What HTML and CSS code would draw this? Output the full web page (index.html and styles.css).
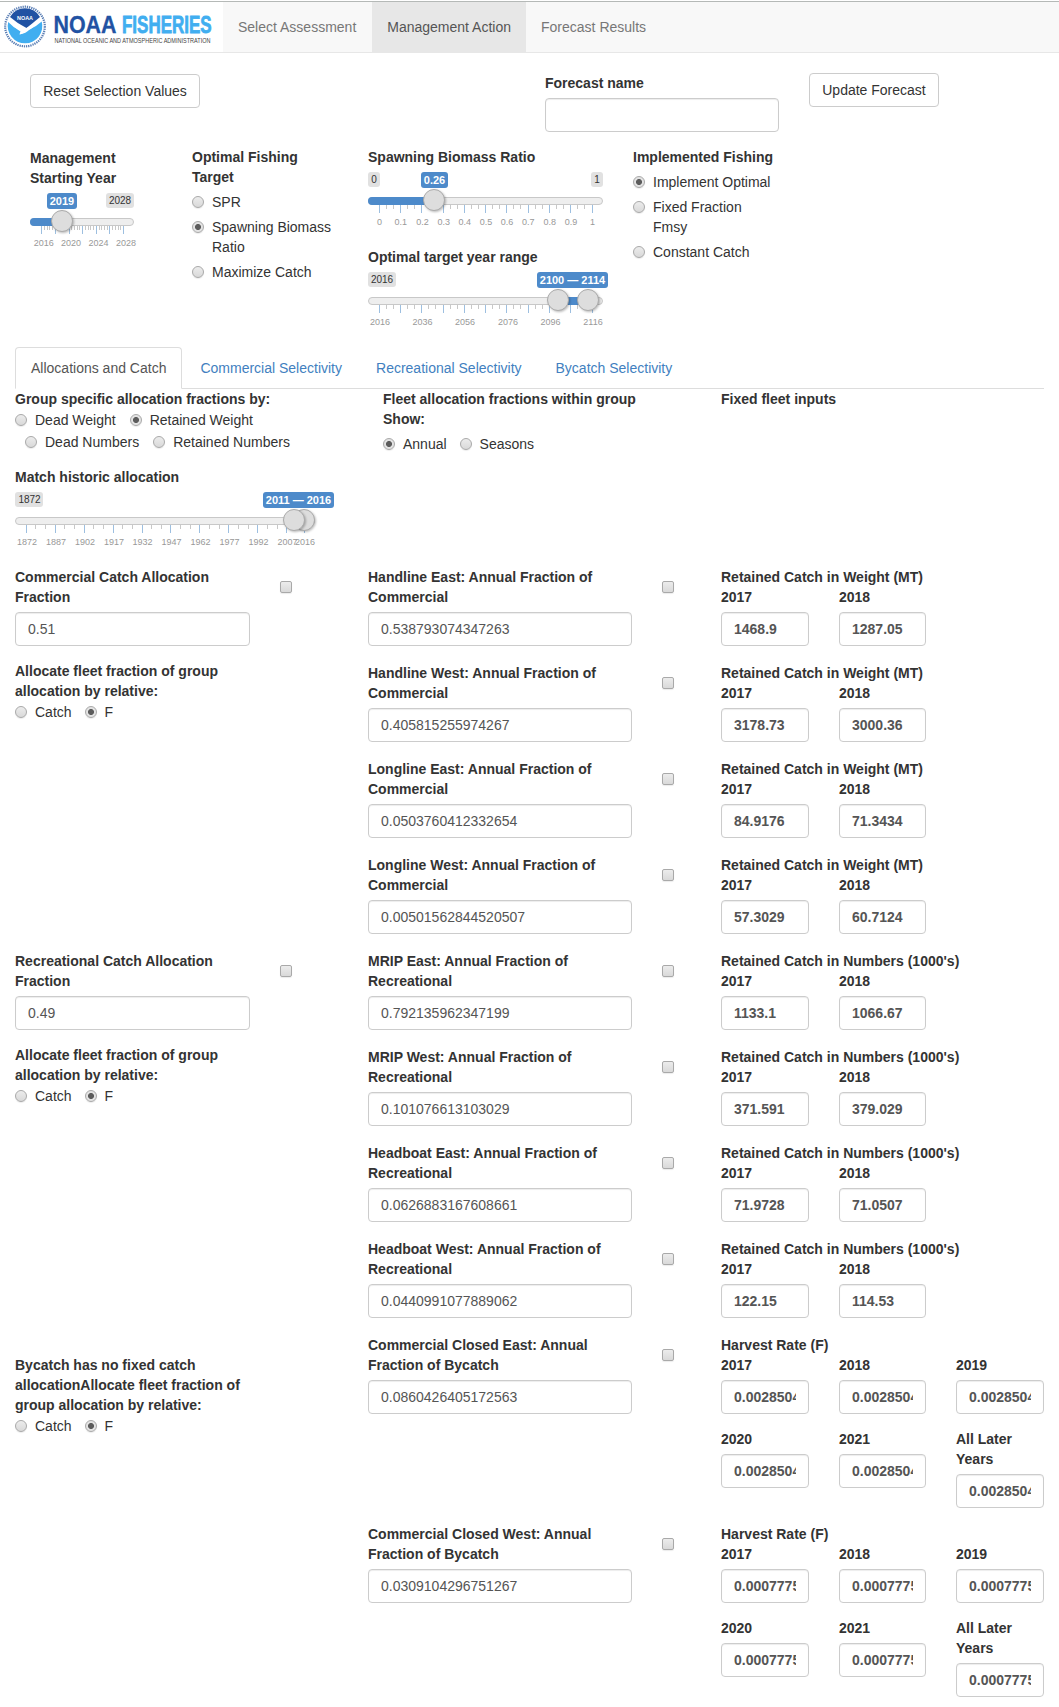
FILE: index.html
```html
<!DOCTYPE html>
<html lang="en">
<head>
<meta charset="utf-8">
<title>NOAA Fisheries - Management Action</title>
<link rel="stylesheet" href="styles.css">
</head>
<body>
<nav class="navbar">
  <div class="brand">
    <svg width="223" height="50" viewBox="0 2 223 50">
      <circle cx="25" cy="26.5" r="19.8" fill="none" stroke="#5b7fb5" stroke-width="2.2" stroke-dasharray="1.3 0.9"/>
      <circle cx="25" cy="26.5" r="17.8" fill="#fff"/>
      <path d="M10 17A17.3 17.3 0 0 1 40 17Q33 23 26.500 28Q18 24 10 17Z" fill="#2152a3"/>
      <path d="M8.200 22Q13 27.500 20.500 31L19.500 34.500Q26 33.500 30 29Q37 26 41.700 21.500A17.300 17.300 0 1 1 8.200 22Z" fill="#41aef0"/>
      <path d="M9 18Q17 23 23 29.500Q33 26 40.500 18Q36 28 25.500 31.500L20.500 34.500L22 32Q13 28 9 18Z" fill="#fff"/>
      <text x="17" y="20" class="logo-mini" textLength="16" lengthAdjust="spacingAndGlyphs">NOAA</text>
      <text transform="translate(53.500 33) scale(.9 1)" class="logo-noaa" textLength="70" lengthAdjust="spacingAndGlyphs">NOAA</text>
      <text transform="translate(122 33) scale(.7 1)" class="logo-fish" textLength="128" lengthAdjust="spacingAndGlyphs">FISHERIES</text>
      <text transform="translate(54.500 43) scale(.75 1)" class="logo-sub" textLength="208" lengthAdjust="spacingAndGlyphs">NATIONAL OCEANIC AND ATMOSPHERIC ADMINISTRATION</text>
    </svg>
  </div>
  <a class="nav-item wide">Select Assessment</a>
  <a class="nav-item active">Management Action</a>
  <a class="nav-item">Forecast Results</a>
</nav>

<section class="actions">
  <div><button class="btn reset">Reset Selection Values</button></div>
  <label class="forecast"><span class="label">Forecast name</span><input class="field" type="text"></label>
  <div><button class="btn update">Update Forecast</button></div>
</section>

<section class="settings">
  <div class="start-year">
    <div class="label">Management<br>Starting Year</div>
    <svg class="slider" width="104" height="60">
      <rect class="track" x="0.500" y="25.500" width="103" height="7" rx="3.500"/>
      <path class="bar" d="M32 25H4a4 4 0 0 0 0 8H32z"/>
      <path class="major" d="M11.500 33v8M25.500 33v8M39.500 33v8M52.500 33v8M66.500 33v8M79.500 33v8M93.500 33v8"/>
      <path class="minor" d="M14.500 33v4M17.500 33v4M19.500 33v4M22.500 33v4M28.500 33v4M30.500 33v4M33.500 33v4M36.500 33v4M41.500 33v4M44.500 33v4M47.500 33v4M49.500 33v4M55.500 33v4M58.500 33v4M60.500 33v4M63.500 33v4M69.500 33v4M71.500 33v4M74.500 33v4M77.500 33v4M82.500 33v4M85.500 33v4M88.500 33v4M90.500 33v4"/>
      <g class="tick"><text x="13.700" y="53">2016</text><text x="41" y="53">2020</text><text x="68.500" y="53">2024</text><text x="96" y="53">2028</text></g>
      <rect class="edge" x="76" y="0" width="28" height="15" rx="3"/><text class="edge-text" x="90" y="11">2028</text>
      <rect class="bar" x="17" y="0" width="30" height="16" rx="3"/><text class="value" x="32" y="12">2019</text>
      <circle class="handle" cx="32" cy="28" r="10.500"/>
    </svg>
  </div>
  <div class="radios">
    <div class="label">Optimal Fishing<br>Target</div>
    <label><input type="radio" name="target">SPR</label>
    <label><input type="radio" name="target" checked>Spawning Biomass<br>Ratio</label>
    <label><input type="radio" name="target">Maximize Catch</label>
  </div>
  <div class="ratio">
    <div class="label">Spawning Biomass Ratio</div>
    <svg class="slider" width="235" height="60">
      <rect class="track" x="0.500" y="25.500" width="234" height="7" rx="3.500"/>
      <path class="bar" d="M66 25H4a4 4 0 0 0 0 8H66z"/>
      <path class="major" d="M11.500 33v8M32.500 33v8M53.500 33v8M75.500 33v8M96.500 33v8M117.500 33v8M138.500 33v8M160.500 33v8M181.500 33v8M202.500 33v8M224.500 33v8"/>
      <path class="minor" d="M18.500 33v4M25.500 33v4M39.500 33v4M46.500 33v4M60.500 33v4M67.500 33v4M82.500 33v4M89.500 33v4M103.500 33v4M110.500 33v4M124.500 33v4M131.500 33v4M145.500 33v4M152.500 33v4M167.500 33v4M174.500 33v4M188.500 33v4M195.500 33v4M209.500 33v4M216.500 33v4"/>
      <g class="tick"><text x="11.500" y="53">0</text><text x="32.700" y="53">0.1</text><text x="54.500" y="53">0.2</text><text x="75.700" y="53">0.3</text><text x="96.700" y="53">0.4</text><text x="118" y="53">0.5</text><text x="139" y="53">0.6</text><text x="160.300" y="53">0.7</text><text x="181.700" y="53">0.8</text><text x="203" y="53">0.9</text><text x="224.500" y="53">1</text></g>
      <rect class="edge" x="0" y="0" width="12" height="15" rx="3"/><text class="edge-text" x="6" y="11">0</text>
      <rect class="edge" x="223" y="0" width="12" height="15" rx="3"/><text class="edge-text" x="229" y="11">1</text>
      <rect class="bar" x="53" y="0" width="27" height="16" rx="3"/><text class="value" x="66.500" y="12">0.26</text>
      <circle class="handle" cx="66" cy="28" r="10.500"/>
    </svg>
    <div class="label range-label">Optimal target year range</div>
    <svg class="slider" width="235" height="60">
      <rect class="track" x="0.500" y="25.500" width="234" height="7" rx="3.500"/>
      <rect class="bar" x="190" y="25" width="30" height="8"/>
      <path class="major" d="M11.500 33v8M32.500 33v8M53.500 33v8M75.500 33v8M96.500 33v8M117.500 33v8M138.500 33v8M160.500 33v8M181.500 33v8M202.500 33v8M224.500 33v8"/>
      <path class="minor" d="M18.500 33v4M25.500 33v4M39.500 33v4M46.500 33v4M60.500 33v4M67.500 33v4M82.500 33v4M89.500 33v4M103.500 33v4M110.500 33v4M124.500 33v4M131.500 33v4M145.500 33v4M152.500 33v4M167.500 33v4M174.500 33v4M188.500 33v4M195.500 33v4M209.500 33v4M216.500 33v4"/>
      <g class="tick"><text x="12" y="53">2016</text><text x="54.500" y="53">2036</text><text x="97" y="53">2056</text><text x="140" y="53">2076</text><text x="182.500" y="53">2096</text><text x="225" y="53">2116</text></g>
      <rect class="edge" x="0" y="0" width="28" height="15" rx="3"/><text class="edge-text" x="14" y="11">2016</text>
      <rect class="bar" x="169" y="0" width="71" height="16" rx="3"/><text class="value" x="204.500" y="12">2100 — 2114</text>
      <circle class="handle" cx="190" cy="28" r="10.500"/><circle class="handle" cx="220" cy="28" r="10.500"/>
    </svg>
  </div>
  <div class="radios">
    <div class="label">Implemented Fishing</div>
    <label><input type="radio" name="impl" checked>Implement Optimal</label>
    <label><input type="radio" name="impl">Fixed Fraction<br>Fmsy</label>
    <label><input type="radio" name="impl">Constant Catch</label>
  </div>
</section>

<div class="tabs">
  <a class="tab current">Allocations and Catch</a>
  <a class="tab">Commercial Selectivity</a>
  <a class="tab">Recreational Selectivity</a>
  <a class="tab">Bycatch Selectivity</a>
</div>

<section class="panel-head">
  <div>
    <div class="label">Group specific allocation fractions by:</div>
    <div class="inline first"><label><input type="radio" name="grp">Dead Weight</label><label><input type="radio" name="grp" checked>Retained Weight</label></div>
    <div class="inline second"><label><input type="radio" name="grp">Dead Numbers</label><label><input type="radio" name="grp">Retained Numbers</label></div>
    <div class="label historic">Match historic allocation</div>
    <svg class="slider" width="300" height="60">
      <rect class="track" x="0.500" y="25.500" width="299" height="7" rx="3.500"/>
      <path class="major" d="M11.500 33v8M40.500 33v8M69.500 33v8M98.500 33v8M127.500 33v8M155.500 33v8M184.500 33v8M213.500 33v8M242.500 33v8M271.500 33v8M289.500 33v8"/>
      <path class="minor" d="M20.500 33v4M30.500 33v4M49.500 33v4M59.500 33v4M78.500 33v4M88.500 33v4M107.500 33v4M117.500 33v4M136.500 33v4M146.500 33v4M165.500 33v4M175.500 33v4M194.500 33v4M204.500 33v4M223.500 33v4M233.500 33v4M252.500 33v4M262.500 33v4"/>
      <g class="tick"><text x="12" y="53">1872</text><text x="41" y="53">1887</text><text x="70" y="53">1902</text><text x="99" y="53">1917</text><text x="127.500" y="53">1932</text><text x="156.500" y="53">1947</text><text x="185.500" y="53">1962</text><text x="214.500" y="53">1977</text><text x="243.500" y="53">1992</text><text x="272.500" y="53">2007</text><text x="290" y="53">2016</text></g>
      <rect class="edge" x="0" y="0" width="28" height="15" rx="3"/><text class="edge-text" x="14.500" y="11">1872</text>
      <rect class="bar" x="248" y="0" width="71" height="16" rx="3"/><text class="value" x="283.500" y="12">2011 — 2016</text>
      <circle class="handle" cx="289" cy="28" r="10.500"/><circle class="handle" cx="279" cy="28" r="10.500"/>
    </svg>
  </div>
  <div class="fleet-head">
    <div class="label">Fleet allocation fractions within group<br>Show:</div>
    <div class="inline show"><label><input type="radio" name="show" checked>Annual</label><label><input type="radio" name="show">Seasons</label></div>
  </div>
  <div class="label">Fixed fleet inputs</div>
</section>

<section class="group">
  <div>
    <div class="share"><label><span class="label">Commercial Catch Allocation<br>Fraction</span><input class="field" value="0.51"></label><input type="checkbox"></div>
    <div class="label">Allocate fleet fraction of group<br>allocation by relative:</div>
    <div class="inline relative"><label><input type="radio" name="r1">Catch</label><label><input type="radio" name="r1" checked>F</label></div>
  </div>
  <div>
    <div class="fleet">
      <label><span class="label">Handline East: Annual Fraction of<br>Commercial</span><input class="field" value="0.538793074347263"></label><input type="checkbox">
      <div class="fixed"><div class="label title">Retained Catch in Weight (MT)</div><label>2017<input class="field" value="1468.9"></label><label>2018<input class="field" value="1287.05"></label></div>
    </div>
    <div class="fleet">
      <label><span class="label">Handline West: Annual Fraction of<br>Commercial</span><input class="field" value="0.405815255974267"></label><input type="checkbox">
      <div class="fixed"><div class="label title">Retained Catch in Weight (MT)</div><label>2017<input class="field" value="3178.73"></label><label>2018<input class="field" value="3000.36"></label></div>
    </div>
    <div class="fleet">
      <label><span class="label">Longline East: Annual Fraction of<br>Commercial</span><input class="field" value="0.0503760412332654"></label><input type="checkbox">
      <div class="fixed"><div class="label title">Retained Catch in Weight (MT)</div><label>2017<input class="field" value="84.9176"></label><label>2018<input class="field" value="71.3434"></label></div>
    </div>
    <div class="fleet">
      <label><span class="label">Longline West: Annual Fraction of<br>Commercial</span><input class="field" value="0.00501562844520507"></label><input type="checkbox">
      <div class="fixed"><div class="label title">Retained Catch in Weight (MT)</div><label>2017<input class="field" value="57.3029"></label><label>2018<input class="field" value="60.7124"></label></div>
    </div>
  </div>
</section>

<section class="group">
  <div>
    <div class="share"><label><span class="label">Recreational Catch Allocation<br>Fraction</span><input class="field" value="0.49"></label><input type="checkbox"></div>
    <div class="label">Allocate fleet fraction of group<br>allocation by relative:</div>
    <div class="inline relative"><label><input type="radio" name="r2">Catch</label><label><input type="radio" name="r2" checked>F</label></div>
  </div>
  <div>
    <div class="fleet">
      <label><span class="label">MRIP East: Annual Fraction of<br>Recreational</span><input class="field" value="0.792135962347199"></label><input type="checkbox">
      <div class="fixed"><div class="label title">Retained Catch in Numbers (1000's)</div><label>2017<input class="field" value="1133.1"></label><label>2018<input class="field" value="1066.67"></label></div>
    </div>
    <div class="fleet">
      <label><span class="label">MRIP West: Annual Fraction of<br>Recreational</span><input class="field" value="0.101076613103029"></label><input type="checkbox">
      <div class="fixed"><div class="label title">Retained Catch in Numbers (1000's)</div><label>2017<input class="field" value="371.591"></label><label>2018<input class="field" value="379.029"></label></div>
    </div>
    <div class="fleet">
      <label><span class="label">Headboat East: Annual Fraction of<br>Recreational</span><input class="field" value="0.0626883167608661"></label><input type="checkbox">
      <div class="fixed"><div class="label title">Retained Catch in Numbers (1000's)</div><label>2017<input class="field" value="71.9728"></label><label>2018<input class="field" value="71.0507"></label></div>
    </div>
    <div class="fleet">
      <label><span class="label">Headboat West: Annual Fraction of<br>Recreational</span><input class="field" value="0.0440991077889062"></label><input type="checkbox">
      <div class="fixed"><div class="label title">Retained Catch in Numbers (1000's)</div><label>2017<input class="field" value="122.15"></label><label>2018<input class="field" value="114.53"></label></div>
    </div>
  </div>
</section>

<section class="group">
  <div class="bycatch">
    <div class="label">Bycatch has no fixed catch<br>allocationAllocate fleet fraction of<br>group allocation by relative:</div>
    <div class="inline relative"><label><input type="radio" name="r3">Catch</label><label><input type="radio" name="r3" checked>F</label></div>
  </div>
  <div>
    <div class="fleet tall">
      <label><span class="label">Commercial Closed East: Annual<br>Fraction of Bycatch</span><input class="field" value="0.0860426405172563"></label><input type="checkbox">
      <div class="fixed"><div class="label title">Harvest Rate (F)</div><label>2017<input class="field" value="0.00285044"></label><label>2018<input class="field" value="0.00285044"></label><label>2019<input class="field" value="0.00285044"></label><label>2020<input class="field" value="0.00285044"></label><label>2021<input class="field" value="0.00285044"></label><label>All Later<br>Years<input class="field" value="0.00285044"></label></div>
    </div>
    <div class="fleet">
      <label><span class="label">Commercial Closed West: Annual<br>Fraction of Bycatch</span><input class="field" value="0.0309104296751267"></label><input type="checkbox">
      <div class="fixed"><div class="label title">Harvest Rate (F)</div><label>2017<input class="field" value="0.00077755"></label><label>2018<input class="field" value="0.00077755"></label><label>2019<input class="field" value="0.00077755"></label><label>2020<input class="field" value="0.00077755"></label><label>2021<input class="field" value="0.00077755"></label><label>All Later<br>Years<input class="field" value="0.00077755"></label></div>
    </div>
  </div>
</section>
</body>
</html>
```
FILE: styles.css
```css
* { box-sizing: border-box; }
body {
  margin: 0;
  padding-top: 1px;
  width: 1059px;
  height: 1707px;
  overflow: hidden;
  background: #fff;
  color: #333;
  font: 14px/20px "Liberation Sans", Arial, sans-serif;
}
svg { display: block; }
label { display: block; }
.label { display: block; font-weight: bold; white-space: nowrap; }

/* Navigation bar */
.navbar {
  display: flex;
  height: 52px;
  background: #f8f8f8;
  border-top: 1px solid #b5b9b7;
  border-bottom: 1px solid #e7e7e7;
}
.brand { width: 223px; background: #fff; }
.nav-item { padding: 15px; color: #777; }
.nav-item.wide { padding-right: 16px; }
.nav-item.active { background: #e7e7e7; color: #555; }
.logo-mini { font: bold 6px "Liberation Sans", sans-serif; fill: #fff; }
.logo-noaa { font: bold 24px "Liberation Sans", sans-serif; fill: #2152a3; stroke: #2152a3; stroke-width: .3px; }
.logo-fish { font: bold 24px "Liberation Sans", sans-serif; fill: #41aef0; stroke: #41aef0; stroke-width: .8px; }
.logo-sub { font: 7px "Liberation Sans", sans-serif; fill: #444; }

/* Form controls */
.btn {
  display: block;
  height: 34px;
  padding: 6px 12px;
  border: 1px solid #ccc;
  border-radius: 4px;
  background: #fff;
  color: #333;
  font: inherit;
  white-space: nowrap;
}
.field {
  display: block;
  width: 100%;
  height: 34px;
  margin-top: 5px;
  padding: 6px 12px;
  border: 1px solid #ccc;
  border-radius: 4px;
  background: #fff;
  box-shadow: inset 0 1px 1px rgba(0, 0, 0, .075);
  color: #555;
  font: inherit;
}
input[type="radio"], input[type="checkbox"] {
  appearance: none;
  flex: none;
  width: 12px;
  height: 12px;
  margin: 4px 8px 0 0;
  border: 1px solid #a9a9a9;
  border-radius: 50%;
  background: linear-gradient(#ececec, #d9d9d9);
  box-shadow: 0 1px 1px rgba(0, 0, 0, .08);
}
input[type="radio"]:checked {
  background: radial-gradient(circle, #5c5c5c 2.6px, #e3e3e3 3.4px);
}
input[type="checkbox"] { margin: 14px 0 0; border-radius: 2px; }

/* Top actions */
.actions {
  display: grid;
  grid-template-columns: 515px 264px 1fr;
  height: 94px;
  padding: 20px 30px 0;
}
.forecast { width: 234px; }
.reset { width: 170px; margin-top: 1px; }
.update { width: 130px; }

/* Settings */
.settings {
  display: grid;
  grid-template-columns: 162px 176px 265px 1fr;
  height: 200px;
  padding-left: 30px;
}
.start-year { padding-top: 1px; }
.slider { margin-top: 5px; overflow: visible; }
.range-label { margin-top: 15px; }
.radios label { display: flex; margin-top: 5px; }

/* Slider drawing */
.track { fill: #eee; stroke: #c8c8c8; }
.bar { fill: #4d8aca; }
.major, .minor { fill: none; stroke: #c8c8c8; }
.major { stroke: #9dbfe0; }
.tick { fill: #999; font-size: 9px; text-anchor: middle; }
.edge { fill: #e1e1e1; }
.edge-text { fill: #333; font-size: 10px; text-anchor: middle; }
.value { fill: #fff; font-size: 11px; font-weight: bold; text-anchor: middle; }
.handle { fill: #ddd; stroke: #aaa; filter: drop-shadow(1px 1px 1px rgba(0, 0, 0, .28)); }

/* Tabs */
.tabs {
  display: flex;
  gap: 2px;
  height: 42px;
  margin: 0 15px;
  border-bottom: 1px solid #ddd;
}
.tab { padding: 10px 15px; border: 1px solid transparent; color: #427fc0; }
.tab.current {
  height: 42px;
  border-color: #ddd;
  border-bottom-color: #fff;
  border-radius: 4px 4px 0 0;
  background: #fff;
  color: #555;
}

/* Panel heading */
.panel-head {
  display: grid;
  grid-template-columns: 368px 338px 1fr;
  height: 178px;
  padding-left: 15px;
}
.inline { display: flex; }
.inline label { display: flex; white-space: nowrap; }
.inline.first { margin-top: 1px; gap: 14px; }
.inline.second { margin: 2px 0 0 10px; gap: 14px; }
.historic { margin-top: 15px; }
.inline.show { margin-top: 5px; gap: 13px; }

/* Group and fleet rows */
.group {
  display: grid;
  grid-template-columns: 353px 691px;
  padding-left: 15px;
}
.share { display: grid; grid-template-columns: 235px 12px; column-gap: 30px; margin-bottom: 15px; }
.inline.relative { margin-top: 1px; gap: 13px; }
.bycatch { padding-top: 20px; }
.fleet {
  display: grid;
  grid-template-columns: 264px 12px 323px;
  grid-template-rows: auto;
  column-gap: 30px;
  height: 96px;
}
.fleet.tall { height: 189px; }
.fixed {
  display: grid;
  grid-template-columns: 88px 87px 88px;
  column-gap: 30px;
  row-gap: 15px;
  align-content: start;
  margin-left: 17px;
  font-weight: bold;
}
.fixed .title { grid-column: 1 / -1; margin-bottom: -15px; }
```
